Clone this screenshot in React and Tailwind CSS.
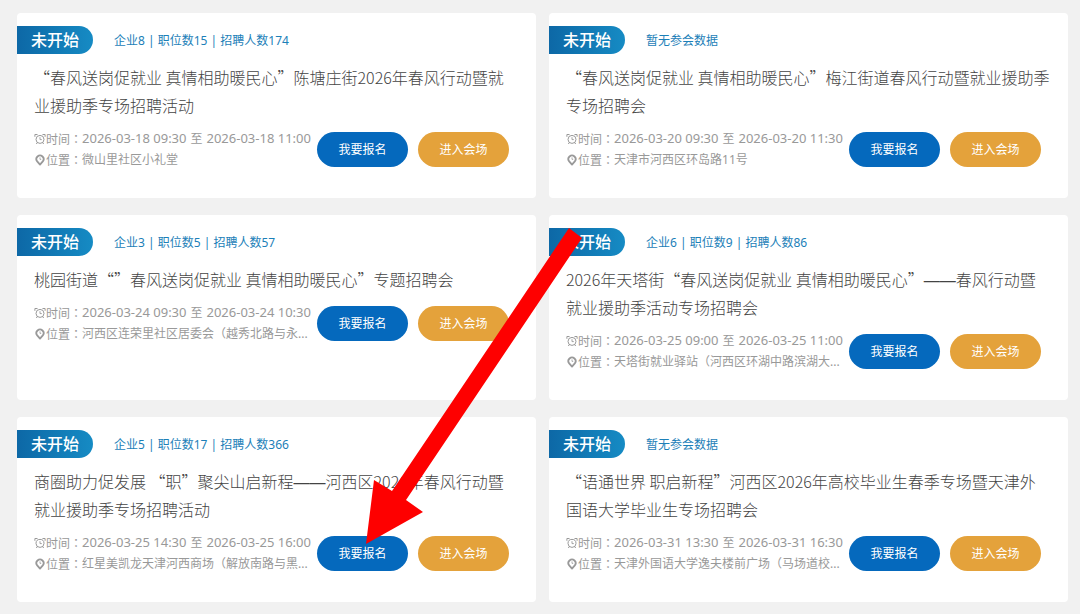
// Job fair list: two-column grid of event cards with sign-up actions

const FAIRS = [
  {
    id: 1,
    stats: '企业8 | 职位数15 | 招聘人数174',
    title: '“春风送岗促就业 真情相助暖民心”陈塘庄街2026年春风行动暨就业援助季专场招聘活动',
    start: '2026-03-18 09:30',
    end: '2026-03-18 11:00',
    place: '微山里社区小礼堂',
  },
  {
    id: 2,
    stats: '暂无参会数据',
    title: '“春风送岗促就业 真情相助暖民心”梅江街道春风行动暨就业援助季专场招聘会',
    start: '2026-03-20 09:30',
    end: '2026-03-20 11:30',
    place: '天津市河西区环岛路11号',
  },
  {
    id: 3,
    stats: '企业3 | 职位数5 | 招聘人数57',
    title: '桃园街道“”春风送岗促就业 真情相助暖民心”专题招聘会',
    start: '2026-03-24 09:30',
    end: '2026-03-24 10:30',
    place: '河西区连荣里社区居委会（越秀北路与永...',
  },
  {
    id: 4,
    stats: '企业6 | 职位数9 | 招聘人数86',
    title: '2026年天塔街“春风送岗促就业 真情相助暖民心”——春风行动暨就业援助季活动专场招聘会',
    start: '2026-03-25 09:00',
    end: '2026-03-25 11:00',
    place: '天塔街就业驿站（河西区环湖中路滨湖大...',
  },
  {
    id: 5,
    stats: '企业5 | 职位数17 | 招聘人数366',
    title: '商圈助力促发展 “职”聚尖山启新程——河西区2026年春风行动暨就业援助季专场招聘活动',
    start: '2026-03-25 14:30',
    end: '2026-03-25 16:00',
    place: '红星美凯龙天津河西商场（解放南路与黑...',
  },
  {
    id: 6,
    stats: '暂无参会数据',
    title: '“语通世界 职启新程”河西区2026年高校毕业生春季专场暨天津外国语大学毕业生专场招聘会',
    start: '2026-03-31 13:30',
    end: '2026-03-31 16:30',
    place: '天津外国语大学逸夫楼前广场（马场道校...',
  },
];

function ClockIcon() {
  return (
    <svg viewBox="0 0 12 12" className="w-3 h-3 flex-shrink-0" fill="none" stroke="currentColor" aria-hidden="true">
      <circle cx="6" cy="6.4" r="4" />
      <path d="M6 4.2v2.4h1.8" strokeWidth="0.9" />
      <path d="M0.9 3.8V1.5h2.6M11.1 3.8V1.5H8.5M3.2 9.8l-.9 1.2M8.8 9.8l.9 1.2" />
    </svg>
  );
}

function PinIcon() {
  return (
    <svg viewBox="0 0 12 12" className="w-3 h-3 flex-shrink-0" fill="none" stroke="currentColor" aria-hidden="true">
      <path d="M6 10.6 3.2 7.4a3.6 3.6 0 1 1 5.6 0Z" strokeWidth="1.8" strokeLinejoin="round" />
      <path d="M6 3.4v2h1.2" strokeWidth="0.8" />
    </svg>
  );
}

// Label font with the colon centred in its box
function Label({ children }) {
  return <span className="font-['Noto_Sans_CJK_TC',sans-serif]">{children}</span>;
}

// Keeps the double dash at two full characters wide
function FairTitle({ text }) {
  const [before, after] = text.split('——');
  if (!after) return text;
  return (
    <>
      {before}
      <span className="leading-none font-['Liberation_Sans',sans-serif]">——</span>
      {after}
    </>
  );
}

function FairCard({ fair }) {
  return (
    <article className="bg-white rounded pt-[13px] pb-7">
      {/* Status + numbers */}
      <div className="flex items-center gap-[21px]">
        <span className="w-[76px] h-7 pl-[14px] rounded-r-full bg-linear-to-r from-[#0d68a6] to-[#168bc4]
                         text-white text-base leading-7 font-medium">
          未开始
        </span>
        <span className="pt-0.5 text-xs text-[#1c80b8]">{fair.stats}</span>
      </div>

      <div className="px-[17px]">
        <h2 className="mt-[9px] text-base leading-7 font-light text-[#444444] font-['Noto_Sans_CJK_SC',sans-serif]">
          <FairTitle text={fair.title} />
        </h2>

        <div className="mt-[9px] pr-[10px] flex items-center">
          {/* Time and place */}
          <div className="flex-1 min-w-0 text-xs leading-[21px] text-[#999999]">
            <p className="flex items-center whitespace-nowrap leading-[21px]">
              <ClockIcon />
              <Label>时间：</Label>
              <time className="text-[13px] leading-[21px]">{fair.start}</time>
              <span className="px-1">至</span>
              <time className="text-[13px] leading-[21px]">{fair.end}</time>
            </p>
            <p className="flex items-center whitespace-nowrap">
              <PinIcon />
              <Label>位置：</Label>
              <span>{fair.place}</span>
            </p>
          </div>

          {/* Actions */}
          <div className="flex gap-[10px] text-xs text-white">
            <button type="button" className="w-[91px] h-[35px] pt-0.5 rounded-full bg-[#0569bd]">我要报名</button>
            <button type="button" className="w-[91px] h-[35px] pt-0.5 rounded-full bg-[#e4a23b]">进入会场</button>
          </div>
        </div>
      </div>
    </article>
  );
}

export default function App() {
  return (
    <main className="relative min-h-screen bg-[#f1f1f1] pt-[13px] pb-3 pl-[17px] pr-3
                     font-['Noto_Sans','Noto_Sans_CJK_SC',sans-serif]">
      <div className="grid grid-cols-2 gap-x-[13px] gap-y-[17px]">
        {FAIRS.map((fair) => (
          <FairCard key={fair.id} fair={fair} />
        ))}
      </div>

      {/* Arrow pointing at the sign-up button */}
      <svg
        viewBox="0 0 217 317"
        className="absolute left-[366px] top-[228px] w-[217px] h-[317px] pointer-events-none"
        aria-hidden="true"
      >
        <polygon points="203,0 216,10 40,272 57,284 0,316 8,252 26,263" fill="#fe0000" />
      </svg>
    </main>
  );
}
